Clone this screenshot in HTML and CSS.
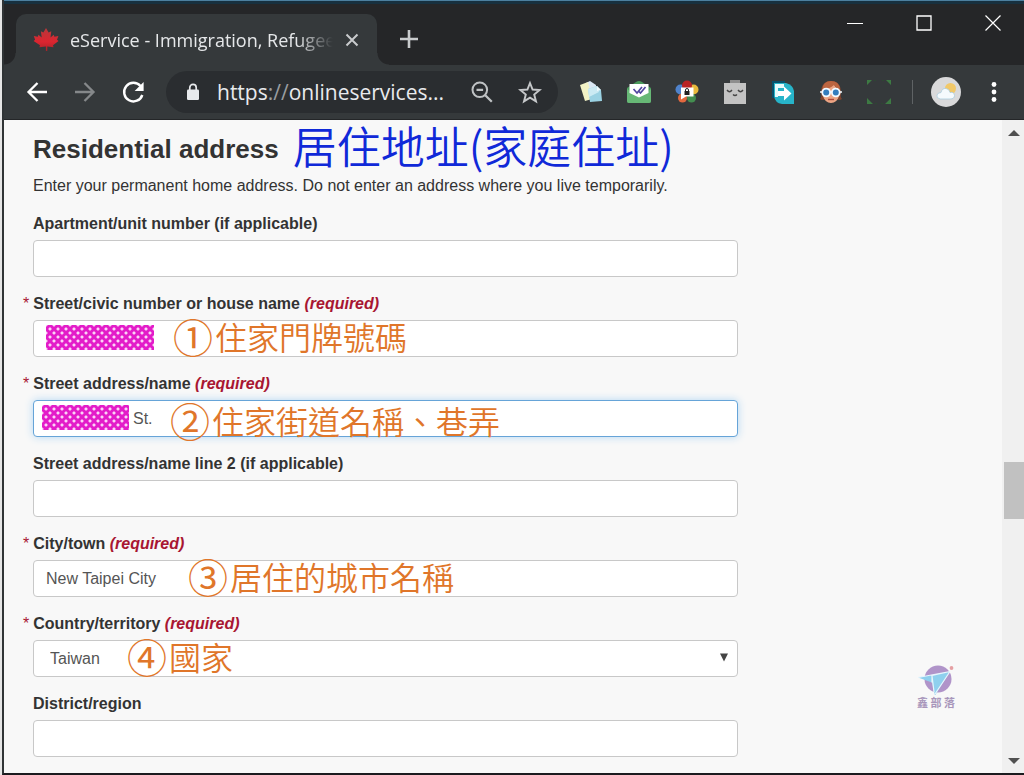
FILE: index.html
```html
<!DOCTYPE html>
<html lang="en">
<head>
<meta charset="utf-8">
<meta name="viewport" content="width=device-width, initial-scale=1">
<title>eService - Immigration, Refugees and Citizenship</title>
<link rel="stylesheet" href="styles.css">
</head>
<body>
<div class="window">
  <header class="tabstrip">
    <div class="tab">
      <svg class="favicon" viewBox="0 0 26 26" aria-hidden="true"><defs><linearGradient id="leaf" x1="0" y1="0" x2="0" y2="1"><stop offset="0" stop-color="#b8383a"/><stop offset=".6" stop-color="#dc2530"/><stop offset="1" stop-color="#a52228"/></linearGradient></defs><path fill="url(#leaf)" d="M13 1l2.600 4.500 2.700-1.300-.8 6.300 3.200-2.700.7 1.900 4-.6-1.400 3.600 1.500 1.200-5.500 4.400.5 2-6.200-.8v4.500h-1.400v-4.500l-6.500.8.6-2L.6 13.900l1.500-1.200L.8 9.100l4 .6.700-1.900 3.200 2.700-.8-6.300 2.500 1.300z"/></svg>
      <span class="tab-title">eService - Immigration, Refugee</span>
      <button class="icon-btn tab-close" aria-label="Close tab"><svg viewBox="0 0 14 14"><path d="M1.500 1.500l11 11M12.500 1.500l-11 11" stroke="#c9cbcd" stroke-width="2"/></svg></button>
    </div>
    <button class="icon-btn new-tab" aria-label="New tab"><svg viewBox="0 0 18 18"><path d="M9 0v18M0 9h18" stroke="#c9cbcd" stroke-width="2.600"/></svg></button>
    <div class="window-controls">
      <button class="icon-btn" aria-label="Minimize"><svg viewBox="0 0 16 16"><path d="M0 8.500h16" stroke="#fff"/></svg></button>
      <button class="icon-btn" aria-label="Maximize"><svg viewBox="0 0 16 16"><path d="M1 1h14v14H1z" stroke="#fff" stroke-width="1.300" fill="none"/></svg></button>
      <button class="icon-btn" aria-label="Close"><svg viewBox="0 0 16 16"><path d="M.5.5l15 15M15.500.5l-15 15" stroke="#fff" stroke-width="1.200"/></svg></button>
    </div>
  </header>

  <nav class="toolbar" aria-label="Browser toolbar">
    <div class="group">
      <button class="icon-btn" aria-label="Back"><svg viewBox="0 0 24 24"><path d="M22 12H4M12.500 3L3.500 12l9 9" stroke="#fff" stroke-width="2.300" fill="none"/></svg></button>
      <button class="icon-btn" aria-label="Forward"><svg viewBox="0 0 24 24"><path d="M2 12h18M11.500 3l9 9-9 9" stroke="#85888a" stroke-width="2.300" fill="none"/></svg></button>
      <button class="icon-btn" aria-label="Reload"><svg viewBox="0 0 24 24"><path d="M19.500 6A9.300 9.300 0 1 0 21.300 15" stroke="#fff" stroke-width="2.400" fill="none"/><path d="M22.600 2v9h-9z" fill="#fff"/></svg></button>
    </div>
    <div class="omnibox">
      <svg class="lock" viewBox="0 0 14 18" aria-hidden="true"><rect x="1" y="6.500" width="12" height="10.500" rx="1.200" fill="#e8eaed"/><path d="M3.800 7V4.500a3.200 3.200 0 0 1 6.400 0V7" stroke="#e8eaed" stroke-width="1.700" fill="none"/></svg>
      <span class="url">https<span class="url-dim">://</span>onlineservices...</span>
      <button class="icon-btn" aria-label="Zoom out"><svg viewBox="0 0 24 24"><circle cx="9.800" cy="9.800" r="7.300" stroke="#bfc2c4" stroke-width="2" fill="none"/><path d="M6.500 9.800h6.600M15 15l6.800 6.800" stroke="#bfc2c4" stroke-width="2.300"/></svg></button>
      <button class="icon-btn" aria-label="Bookmark"><svg viewBox="0 0 24 24"><path d="M12 3l2.600 6.500 7 .5-5.400 4.500 1.800 6.900-6-3.800-6 3.800 1.800-6.900L2.400 10l7-.5z" stroke="#c6c8ca" stroke-width="1.900" fill="none"/></svg></button>
    </div>
    <div class="group">
      <button class="icon-btn" aria-label="Notes"><svg viewBox="0 0 24 24"><path d="M7 3l4-2 6 4v8l-7 2z" fill="#dbe8f4"/><path d="M1 5l8-3 4 17-7 2z" fill="#f2f2c5"/><path d="M9 9l9-3 4 4 1 11-12 1z" fill="#9bd2e3"/><path d="M9 9l9-3 2 6-10 5z" fill="#cbeaf3"/><path d="M18 6l4 4-4 1z" fill="#eff9fc"/></svg></button>
      <button class="icon-btn" aria-label="Mail checker"><svg viewBox="0 0 24 24"><path d="M0 8l9-6q3-2 6 0l9 6v13q0 2-2 2H2q-2 0-2-2z" fill="#4b9a5c"/><path d="M0 9l12 8 12-8v12q0 2-2 2H2q-2 0-2-2z" fill="#67b876"/><path d="M2.500 4h19v9L12 17.500 2.500 13z" fill="#fff"/><path d="M6.500 9l3.500 4 5-6M11.500 11l2 2 5-6" stroke="#5146a0" stroke-width="1.700" fill="none"/></svg></button>
      <button class="icon-btn" aria-label="Password manager"><svg viewBox="0 0 24 24"><circle cx="5.500" cy="9.500" r="5" fill="#4f83cc"/><circle cx="18.500" cy="9.500" r="5" fill="#e8b93d"/><circle cx="7.500" cy="18" r="4.500" fill="#e2683f"/><circle cx="16.500" cy="18" r="4.500" fill="#438e50"/><circle cx="12" cy="5.500" r="5" fill="#b92323"/><path d="M6 7.500h12.500v9h-7.500l-5 3z" fill="#fff"/><path d="M9.500 11h5v4h-5z" fill="#222"/><path d="M10.500 11.500v-1.500a1.500 1.500 0 0 1 3 0v1.500" stroke="#222" fill="none"/></svg></button>
      <button class="icon-btn" aria-label="Robot"><svg viewBox="0 0 24 24"><path d="M7 0h10v4H7z" fill="#8e8e8e"/><path d="M1 3h22v21H1z" fill="#c3c3c3"/><path d="M4 10q2.500 3.500 5 0M15 10q2.500 3.500 5 0M10 14.500q2 2 4 0" stroke="#444" stroke-width="1.300" fill="none"/></svg></button>
      <button class="icon-btn" aria-label="Share"><svg viewBox="0 0 24 24"><path d="M1 1h13v3H4v14H1z" fill="#07516c"/><path d="M3 3h12q7 2 8 8v13H11q-7-1-8-8z" fill="#27b4c9"/><path d="M4 4h9v4H7v9H4z" fill="#e8fbfc"/><path d="M7 11h6V6.500l7.500 7-7.500 7V16H7z" fill="#fff"/></svg></button>
      <button class="icon-btn" aria-label="Character"><svg viewBox="0 0 24 24"><path d="M1 19q2-2 1-6Q2 1 12 1t10 12q-1 4 1 6-3 2-5 0H6q-2 2-5 0z" fill="#80452f"/><path d="M4 9q8-2 11-5 1 4 5 5v7q-2 7-8 7t-8-7z" fill="#eda584"/><path d="M3 10Q4 1 12 1t9 8q-4-1-6-4-4 4-12 5z" fill="#bc6540"/><path d="M1 12h22" stroke="#f4faff" stroke-width="1.500"/><circle cx="7.200" cy="12.500" r="3.900" fill="#347dbd" stroke="#f4faff" stroke-width="1.800"/><circle cx="16.800" cy="12.500" r="3.900" fill="#347dbd" stroke="#f4faff" stroke-width="1.800"/><path d="M9 19.500h6" stroke="#a9473b" stroke-width="1.400"/></svg></button>
      <button class="icon-btn" aria-label="Capture"><svg viewBox="0 0 24 24"><path d="M0 0h5L0 5zM19 0h5v5zM0 18l6 6H0zM24 18v6h-6z" fill="#3d7a43"/><path d="M7 .5h2M15 .5h2M8 23.500h2M14 23.500h2" stroke="#2d4632"/></svg></button>
    </div>
    <span class="divider"></span>
    <button class="icon-btn avatar" aria-label="Profile"><svg viewBox="0 0 30 30"><circle cx="15" cy="15" r="15" fill="#d9d9da"/><circle cx="19.500" cy="11.500" r="5.500" fill="#f1c868"/><path d="M9 22q-4-1-3-4 1-2.500 4-2.500 1-4.500 5-4 3.500.5 4 4 4-1 4.500 3 0 3.500-4.500 3.500z" fill="#f5fafd" stroke="#a9cbdc" stroke-width=".8"/></svg></button>
    <button class="icon-btn" aria-label="Menu"><svg viewBox="0 0 24 24" fill="#fff"><circle cx="12" cy="4.500" r="2.400"/><circle cx="12" cy="12" r="2.400"/><circle cx="12" cy="19.500" r="2.400"/></svg></button>
  </nav>

  <div class="viewport">
    <main class="page">
      <div class="heading-row">
        <h1 class="heading">Residential address</h1>
        <span class="heading-note" lang="zh-Hant">居住地址(家庭住址)</span>
      </div>
      <p class="intro">Enter your permanent home address. Do not enter an address where you live temporarily.</p>
      <form class="form">
        <div class="field">
          <label for="unit">Apartment/unit number (if applicable)</label>
          <div class="control"><input id="unit" type="text"></div>
        </div>
        <div class="field">
          <label for="number"><span class="star">*</span>Street/civic number or house name <em>(required)</em></label>
          <div class="control"><input id="number" type="text">
            <span class="mask mask-number"></span>
            <span class="note note-number" lang="zh-Hant"><span class="num">①</span>住家門牌號碼</span>
          </div>
        </div>
        <div class="field">
          <label for="street"><span class="star">*</span>Street address/name <em>(required)</em></label>
          <div class="control"><input id="street" class="active after-mask" type="text" value="St.">
            <span class="mask mask-street"></span>
            <span class="note note-street" lang="zh-Hant"><span class="num">②</span>住家街道名稱、巷弄</span>
          </div>
        </div>
        <div class="field">
          <label for="street2">Street address/name line 2 (if applicable)</label>
          <div class="control"><input id="street2" type="text"></div>
        </div>
        <div class="field">
          <label for="city"><span class="star">*</span>City/town <em>(required)</em></label>
          <div class="control"><input id="city" type="text" value="New Taipei City">
            <span class="note note-city" lang="zh-Hant"><span class="num">③</span>居住的城市名稱</span>
          </div>
        </div>
        <div class="field">
          <label for="country"><span class="star">*</span>Country/territory <em>(required)</em></label>
          <div class="control"><select id="country"><option>Taiwan</option></select>
            <svg class="caret" viewBox="0 0 8 8" aria-hidden="true"><path d="M0 0h8L4 8z" fill="#444"/></svg>
            <span class="note note-country" lang="zh-Hant"><span class="num">④</span>國家</span>
          </div>
        </div>
        <div class="field">
          <label for="district">District/region</label>
          <div class="control"><input id="district" type="text"></div>
        </div>
      </form>
      <div class="watermark">
        <svg viewBox="0 0 38 30" aria-hidden="true"><circle cx="21" cy="14" r="13.500" fill="#b094c9"/><path d="M1 12.500l32-6-15 24-3-13z" fill="#8fd0ee"/><path d="M1 12.500l32-6-18 4v7M33 6.500L18 29M15 11l2 16" stroke="#e8f5fc" stroke-width="1.200" fill="none"/><circle cx="34.500" cy="3" r="1.900" fill="#e5a0a3"/></svg>
        <span lang="zh-Hant">鑫 部 落</span>
      </div>
    </main>
    <div class="scrollbar">
      <button class="icon-btn" aria-label="Scroll up"><svg viewBox="0 0 12 6"><path d="M0 6l6-6 6 6z" fill="#505050"/></svg></button>
      <div class="track"><span class="before"></span><span class="thumb"></span><span class="after"></span></div>
      <button class="icon-btn" aria-label="Scroll down"><svg viewBox="0 0 12 6"><path d="M0 0h12L6 6z" fill="#505050"/></svg></button>
    </div>
  </div>
</div>
</body>
</html>
```

FILE: styles.css
```css
* { box-sizing: border-box; }

body {
  margin: 0;
  background: #e6e6e6;
  color: #333;
  font: 16px/22px "Liberation Sans", Arial, sans-serif;
}

.window {
  display: flex;
  flex-direction: column;
  min-height: 100vh;
  margin-left: 2px;
  border-left: 2px solid #303436;
  border-bottom: 2px solid #1b1b1f;
  background: #252628;
}

.icon-btn {
  display: flex;
  align-items: center;
  justify-content: center;
  flex: none;
  width: 24px;
  height: 24px;
  padding: 0;
  border: 0;
  background: none;
}
.icon-btn svg { display: block; width: 100%; }

/* Tab strip */
.tabstrip {
  display: flex;
  height: 65px;
  border-top: 1px solid #4c7f9f;
  box-shadow: inset 0 3px #17303f;
}
.tab {
  position: relative;
  display: flex;
  align-items: center;
  width: 361px;
  height: 51px;
  margin: 13px 0 0 12px;
  padding: 0 18px 0 17px;
  border-radius: 10px 10px 0 0;
  background: #35393b;
}
.tab::before,
.tab::after {
  content: "";
  position: absolute;
  bottom: 0;
  width: 12px;
  height: 12px;
}
.tab::before {
  right: 100%;
  background: radial-gradient(circle at 0 0, transparent 11px, #35393b 12px);
}
.tab::after {
  left: 100%;
  background: radial-gradient(circle at 100% 0, transparent 11px, #35393b 12px);
}
.favicon { flex: none; width: 26px; height: 26px; }
.tab-title {
  flex: 1;
  overflow: hidden;
  margin: 0 12px 0 11px;
  color: #e6e8ea;
  font: 18px/28px "Open Sans", "Noto Sans", sans-serif;
  white-space: nowrap;
  -webkit-mask-image: linear-gradient(to right, #000 86%, transparent);
  mask-image: linear-gradient(to right, #000 86%, transparent);
}
.tab-close { width: 14px; }
.new-tab { width: 18px; margin: 26px 0 0 23px; }
.window-controls {
  display: flex;
  gap: 53px;
  margin: 10px 23px 0 auto;
}
.window-controls .icon-btn { width: 16px; }

/* Toolbar */
.toolbar {
  display: flex;
  align-items: center;
  gap: 21px;
  height: 55px;
  padding: 0 18px 0 21px;
  border-bottom: 1px solid #242628;
  background: #35393b;
}
.group { display: flex; gap: 24px; }
.omnibox {
  display: flex;
  align-items: center;
  flex: 1;
  min-width: 0;
  height: 42px;
  padding: 0 16px 0 20px;
  border-radius: 21px;
  background: #2a2d30;
}
.lock { flex: none; width: 14px; height: 18px; }
.url {
  flex: 1;
  overflow: hidden;
  margin-left: 17px;
  color: #e8eaed;
  font: 21px/30px "Open Sans", "Noto Sans", sans-serif;
  white-space: nowrap;
}
.url-dim { color: #9a9da0; }
.omnibox .icon-btn + .icon-btn { margin-left: 24px; }
.divider { width: 1px; height: 24px; background: #5f6365; }
.avatar { width: 30px; height: 30px; margin-left: -3px; }

/* Page */
.viewport { display: flex; flex: 1; background: #f8f8f8; }
.page { position: relative; flex: 1; min-width: 0; padding: 6px 29px 16px; }
.heading-row { display: flex; align-items: center; gap: 14px; height: 46px; }
.heading { margin: 0; font-size: 26px; line-height: 32px; white-space: nowrap; }
.heading-note {
  align-self: flex-start;
  color: #1029d8;
  font: 350 44px/38px "Noto Sans CJK TC", sans-serif;
  white-space: nowrap;
}
.intro { margin: 3px 0 16px; }

.form { display: grid; gap: 16px; max-width: 705px; }
.field { display: grid; gap: 5px; }
.field label { font-weight: bold; }
.field em { color: #a81632; }
.star { margin-left: -10px; padding-right: 4px; color: #a81632; font-weight: normal; }

.control { position: relative; }
.control input,
.control select {
  display: block;
  width: 100%;
  height: 37px;
  padding: 0 12px;
  border: 1px solid #c8c8c8;
  border-radius: 4px;
  background: #fff;
  color: #555;
  font: 16px/22px "Liberation Sans", Arial, sans-serif;
}
.control select { appearance: none; padding: 0 16px; }
.control .active { border-color: #66a4d8; box-shadow: 0 0 8px #b5d8f3; }
.control .after-mask { padding-left: 99px; }

.caret { position: absolute; top: 13px; right: 10px; width: 8px; height: 9px; }

.mask {
  position: absolute;
  top: 5px;
  height: 25px;
  background-color: #e31cc9;
  background-image:
    radial-gradient(circle, #fbd4f6 1px, transparent 2px),
    radial-gradient(circle, #fbd4f6 1px, transparent 2px);
  background-position: 0 0, 4px 4px;
  background-size: 8px 8px;
}
.mask-number { left: 13px; width: 108px; }
.mask-street { left: 9px; width: 87px; }

.note {
  position: absolute;
  top: -2px;
  display: flex;
  align-items: center;
  gap: 2px;
  height: 37px;
  color: #e0762a;
  font: 350 32px/37px "Noto Sans CJK TC", sans-serif;
  white-space: nowrap;
  pointer-events: none;
}
.num { font-size: 40px; font-weight: 400; }
.note-number { left: 140px; }
.note-street { top: 2px; left: 137px; }
.note-city { left: 155px; }
.note-country { left: 94px; }

.watermark {
  position: absolute;
  right: 47px;
  bottom: 64px;
  display: grid;
  justify-items: center;
  color: #a896bb;
  font: bold 11px/14px "Noto Sans CJK TC", sans-serif;
}
.watermark svg { width: 38px; height: 30px; }

/* Scrollbar */
.scrollbar {
  display: flex;
  flex-direction: column;
  width: 22px;
  padding-left: 2px;
  background: #f0f0f0;
}
.scrollbar .icon-btn { width: 20px; height: 25px; }
.scrollbar svg { width: 12px; height: 6px; }
.track { display: flex; flex: 1; flex-direction: column; }
.before { flex: 317; }
.thumb { flex: 57; background: #c1c1c1; }
.after { flex: 229; }
```
